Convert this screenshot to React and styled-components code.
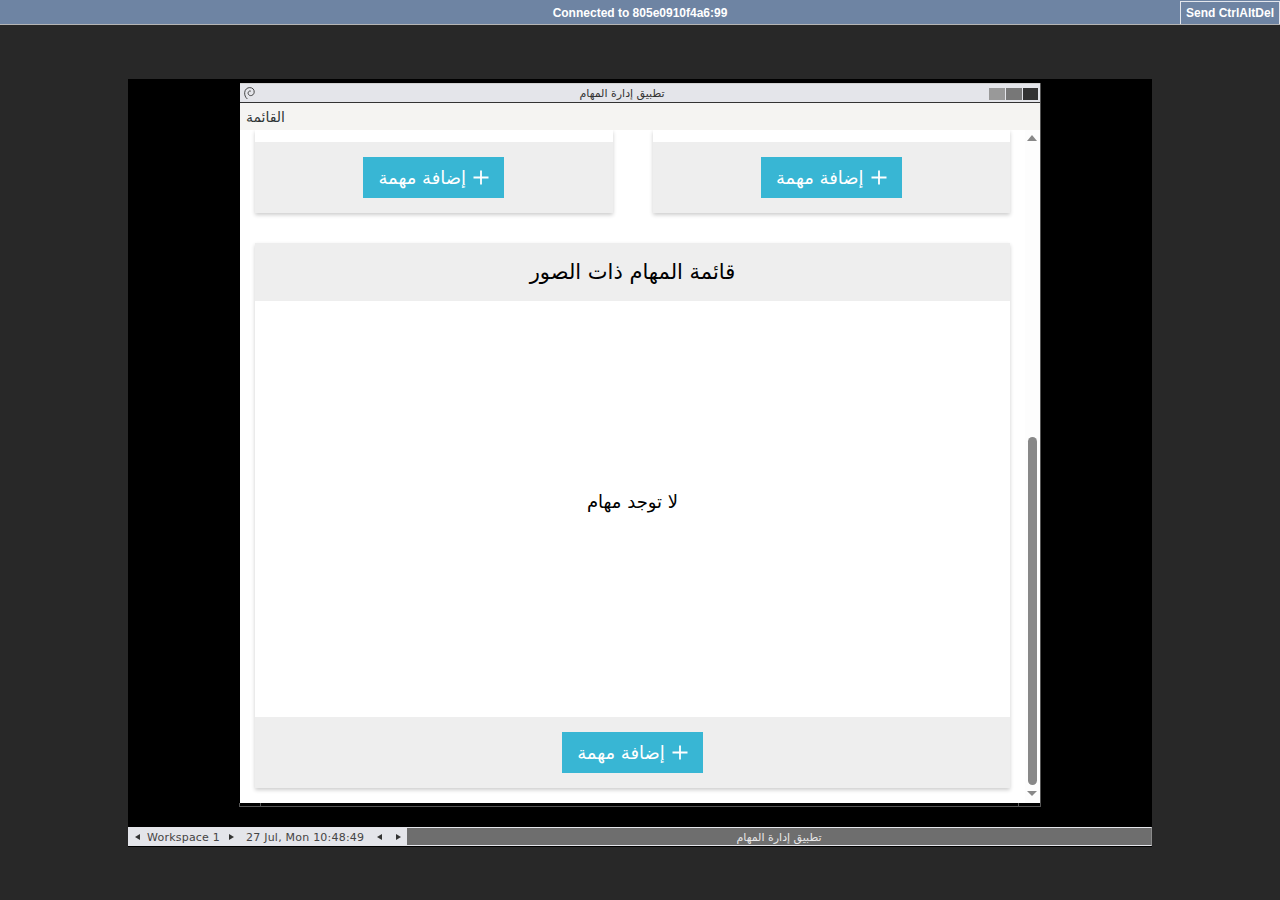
import React from "react";
import styled, { createGlobalStyle } from "styled-components";

const Global = createGlobalStyle`
  html, body {
    margin: 0;
    padding: 0;
    background: #282828;
  }
  * {
    box-sizing: border-box;
  }
`;

const Page = styled.div`
  width: 1280px;
  height: 900px;
  overflow: hidden;
  display: flex;
  flex-direction: column;
  font-family: "DejaVu Sans", sans-serif;
`;

const TopBar = styled.header`
  height: 25px;
  flex: none;
  display: flex;
  background: #6e84a3;
  border-bottom: 1px solid #b5b5b5;
  color: #fff;
  font-family: "Liberation Sans", sans-serif;
  font-size: 12px;
  font-weight: bold;
`;

const Status = styled.div`
  flex: 1;
  text-align: center;
  line-height: 26px;
  padding-left: 100px;
`;

const SendButton = styled.div`
  width: 100px;
  margin-top: 1px;
  padding-left: 5px;
  line-height: 23px;
  border-left: 1px solid #e3e6ec;
  border-top: 1px solid #e3e6ec;
  border-right: 1px solid #e3e6ec;
`;

const Stage = styled.main`
  flex: 1;
  display: flex;
  justify-content: center;
  padding-top: 54px;
`;

const Desktop = styled.div`
  width: 1024px;
  height: 768px;
  background: #000;
  display: flex;
  flex-direction: column;
  padding-top: 4px;
`;

const Window = styled.section`
  width: 801px;
  height: 724px;
  margin-left: 112px;
  display: flex;
  flex-direction: column;
  border-right: 1px solid #555;
`;

const TitleBar = styled.div`
  height: 20px;
  flex: none;
  display: flex;
  align-items: center;
  padding: 1px 2px 0 4px;
  background: #e4e5ea;
  border-top: 1px solid #d0d0d0;
  border-bottom: 1px solid #333;
`;

const TitleText = styled.div`
  flex: 1;
  text-align: center;
  font-size: 11px;
  line-height: 17px;
  color: #333;
`;

const WindowButtons = styled.div`
  display: flex;
  gap: 1px;
`;

const WindowButton = styled.span`
  width: ${props => props.$width}px;
  height: 12px;
  background: ${props => props.$color};
`;

const MenuBar = styled.nav`
  height: 27px;
  flex: none;
  background: #f5f4f2;
  color: #2e3436;
  font-size: 14px;
  line-height: 28px;
  padding-left: 6px;
`;

const Viewport = styled.div`
  flex: 1;
  display: flex;
  min-height: 0;
  background: #fff;
`;

const Content = styled.div`
  width: 785px;
  padding-left: 15px;
  display: flex;
  flex-direction: column;
  gap: 30px;
  overflow: hidden;
`;

const TopRow = styled.div`
  display: grid;
  grid-template-columns: 357.5px 357.5px;
  column-gap: 40px;
  width: 755px;
`;

const Card = styled.div`
  background: #fff;
  box-shadow: 0 2px 4px rgba(0, 0, 0, 0.2);
  display: flex;
  flex-direction: column;
`;

const CutCard = styled(Card)`
  padding-top: 12px;
`;

const WideCard = styled(Card)`
  width: 755px;
`;

const CardHeader = styled.h2`
  margin: 0;
  height: 58px;
  background: #eee;
  color: #000;
  font-size: 21px;
  font-weight: normal;
  line-height: 58px;
  text-align: center;
`;

const CardBody = styled.div`
  height: 416px;
  padding-bottom: 16px;
  display: flex;
  align-items: center;
  justify-content: center;
  color: #000;
  font-size: 18px;
`;

const CardFooter = styled.div`
  height: 71px;
  background: #eee;
  display: flex;
  align-items: center;
  justify-content: center;
`;

const AddButton = styled.div`
  width: 141px;
  height: 41px;
  background: #38b6d4;
  color: #fff;
  display: flex;
  align-items: center;
  justify-content: center;
  gap: 7px;
  font-size: 18px;
`;

const Scrollbar = styled.div`
  width: 15px;
  padding: 5px 0 7px;
  display: flex;
  flex-direction: column;
  align-items: center;
  background: #fdfdfd;
`;

const Track = styled.div`
  flex: 1;
  width: 9px;
  margin: 0 0 6px;
  display: flex;
  flex-direction: column;
  justify-content: flex-end;
`;

const Thumb = styled.div`
  height: 348px;
  background: #888;
  border-radius: 5px;
`;

const Arrow = styled.span`
  width: 0;
  height: 0;
  flex: none;
  margin-right: 1px;
  border-left: 5px solid transparent;
  border-right: 5px solid transparent;
  ${props =>
    props.$down
      ? "border-top: 5px solid #888;"
      : "border-bottom: 6px solid #888;"}
`;

const Grips = styled.div`
  height: 4px;
  flex: none;
  margin-left: -1px;
  display: flex;
  background: #000;
  border-left: 1px solid #555;
  border-bottom: 1px solid #555;
`;

const Grip = styled.span`
  width: ${props => props.$width}px;
  flex: ${props => (props.$grow ? 1 : "none")};
  border-right: ${props => (props.$last ? "none" : "1px solid #555")};
`;

const Panel = styled.footer`
  margin-top: auto;
  margin-bottom: 1px;
  height: 19px;
  display: flex;
  font-size: 11px;
  line-height: 19px;
`;

const PanelLeft = styled.div`
  width: 279px;
  display: flex;
  align-items: center;
  padding: 1px 0 0 7px;
  background: #e4e5ea;
  color: #444;
  letter-spacing: 0.22px;
`;

const PanelArrow = styled.span`
  width: 0;
  height: 0;
  flex: none;
  border-top: 3px solid transparent;
  border-bottom: 3px solid transparent;
  margin-left: ${props => props.$gap}px;
  ${props =>
    props.$right ? "border-left: 5px solid #333;" : "border-right: 5px solid #333;"}
`;

const PanelLabel = styled.span`
  margin-left: ${props => props.$gap}px;
  white-space: nowrap;
`;

const TaskButton = styled.div`
  flex: 1;
  background: #6e6e6e;
  border-top: 1px solid #e4e5ea;
  border-bottom: 1px solid #e4e5ea;
  border-right: 1px solid #8a8a8a;
  color: #e8e8e8;
  text-align: center;
  line-height: 19px;
`;

function Swirl() {
  return (
    <svg width="11" height="13" viewBox="0 0 11 13" fill="none" stroke="#333" strokeWidth="0.9">
      <path d="M3.4 12 C1.4 10.4 .4 8 .7 5.4 C1 2.4 3.2 .6 5.8 .6 C8.6 .6 10.4 2.6 10.2 5.2 C10 7.4 8.2 8.8 6.4 8.6 C4.8 8.4 3.8 7 4.2 5.5 C4.5 4.3 5.6 3.7 6.8 4.1" />
    </svg>
  );
}

function Plus() {
  return (
    <svg width="16" height="15" viewBox="0 0 16 15" stroke="#fff" strokeWidth="1.8">
      <path d="M8 .5v14M.5 7.5h15" />
    </svg>
  );
}

function Add() {
  return (
    <AddButton dir="rtl">
      <Plus />
      <span>إضافة مهمة</span>
    </AddButton>
  );
}

export default function App() {
  return (
    <Page>
      <Global />
      <TopBar>
        <Status>Connected to 805e0910f4a6:99</Status>
        <SendButton>Send CtrlAltDel</SendButton>
      </TopBar>
      <Stage>
        <Desktop>
          <Window>
            <TitleBar>
              <Swirl />
              <TitleText>تطبيق إدارة المهام</TitleText>
              <WindowButtons>
                <WindowButton $width={16} $color="#999" />
                <WindowButton $width={16} $color="#777" />
                <WindowButton $width={15} $color="#333" />
              </WindowButtons>
            </TitleBar>
            <MenuBar>القائمة</MenuBar>
            <Viewport>
              <Content>
                <TopRow>
                  <CutCard>
                    <CardFooter>
                      <Add />
                    </CardFooter>
                  </CutCard>
                  <CutCard>
                    <CardFooter>
                      <Add />
                    </CardFooter>
                  </CutCard>
                </TopRow>
                <WideCard>
                  <CardHeader>قائمة المهام ذات الصور</CardHeader>
                  <CardBody>لا توجد مهام</CardBody>
                  <CardFooter>
                    <Add />
                  </CardFooter>
                </WideCard>
              </Content>
              <Scrollbar>
                <Arrow />
                <Track>
                  <Thumb />
                </Track>
                <Arrow $down />
              </Scrollbar>
            </Viewport>
            <Grips>
              <Grip $width={21} />
              <Grip $grow />
              <Grip $width={21} $last />
            </Grips>
          </Window>
          <Panel>
            <PanelLeft>
              <PanelArrow $gap={0} />
              <PanelLabel $gap={7}>Workspace 1</PanelLabel>
              <PanelArrow $gap={9} $right />
              <PanelLabel $gap={12}>27 Jul, Mon 10:48:49</PanelLabel>
              <PanelArrow $gap={13} />
              <PanelArrow $gap={14} $right />
            </PanelLeft>
            <TaskButton>تطبيق إدارة المهام</TaskButton>
          </Panel>
        </Desktop>
      </Stage>
    </Page>
  );
}
